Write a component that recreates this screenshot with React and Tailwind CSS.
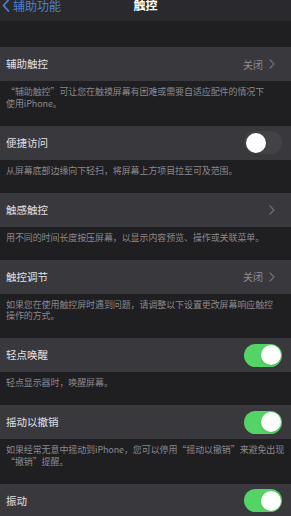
import React from "react";

const font = { fontFamily: '"Noto Sans CJK SC", "Noto Sans", sans-serif' };

const Chevron = () => (
  <svg width="6" height="10" viewBox="0 0 6 10" className="ml-[6px]">
    <path d="M1 1l4 4-4 4" fill="none" stroke="#6f6e74" strokeWidth="1.3" strokeLinecap="round" strokeLinejoin="round" />
  </svg>
);

const Toggle = ({ on }) => (
  <div
    className={
      "w-[38px] h-[23px] rounded-full p-[1.5px] flex items-center " +
      (on ? "bg-[#54d467] justify-end" : "bg-[#434247] justify-start")
    }
  >
    <div className="w-[20px] h-[20px] rounded-full bg-white shadow" />
  </div>
);

const Row = ({ label, value, chevron, toggle }) => (
  <div className="h-[34px] bg-[#39383c] px-[6px] flex items-center justify-between">
    <span className="text-[10.5px] text-[#e2e2e6]">{label}</span>
    <div className="flex items-center pr-[10px]">
      {value && <span className="text-[10px] text-[#8e8d92]">{value}</span>}
      {chevron && <Chevron />}
    </div>
    {toggle !== undefined && (
      <div className="-ml-[10px] mr-[3px]">
        <Toggle on={toggle} />
      </div>
    )}
  </div>
);

const Note = ({ children }) => (
  <div className="px-[6px] pt-[5px] pb-[16.5px] text-[9px] leading-[11.5px] text-[#8a898e] whitespace-nowrap tracking-[-0.1px]">
    {children}
  </div>
);

export default function App() {
  return (
    <div lang="zh-CN" style={font} className="w-[291px] h-[516px] overflow-hidden bg-[#1f1e21]">
      <div className="h-[21px] bg-[#2a292d] relative">
        <div className="absolute left-[2px] top-[-1px] flex items-center">
          <svg width="8" height="13" viewBox="0 0 8 13">
            <path d="M6.5 1L1.5 6.5l5 5.5" fill="none" stroke="#4a80cb" strokeWidth="1.8" strokeLinecap="round" strokeLinejoin="round" />
          </svg>
          <span className="ml-[3px] text-[12px] leading-[12px] text-[#4a80cb]">辅助功能</span>
        </div>
        <div className="absolute left-0 right-0 top-[-1px] text-center text-[12px] leading-[12px] font-semibold text-white">
          触控
        </div>
      </div>
      <div className="h-[26px]" />

      <Row label="辅助触控" value="关闭" chevron />
      <Note>
        “辅助触控”可让您在触摸屏幕有困难或需要自适应配件的情况下
        <br />
        使用iPhone。
      </Note>

      <Row label="便捷访问" toggle={false} />
      <Note>从屏幕底部边缘向下轻扫，将屏幕上方项目拉至可及范围。</Note>

      <Row label="触感触控" chevron />
      <Note>用不同的时间长度按压屏幕，以显示内容预览、操作或关联菜单。</Note>

      <Row label="触控调节" value="关闭" chevron />
      <Note>
        如果您在使用触控屏时遇到问题，请调整以下设置更改屏幕响应触控
        <br />
        操作的方式。
      </Note>

      <Row label="轻点唤醒" toggle={true} />
      <Note>轻点显示器时，唤醒屏幕。</Note>

      <Row label="摇动以撤销" toggle={true} />
      <Note>
        如果经常无意中摇动到iPhone，您可以停用“摇动以撤销”来避免出现
        <br />
        “撤销”提醒。
      </Note>

      <Row label="振动" toggle={true} />
    </div>
  );
}
